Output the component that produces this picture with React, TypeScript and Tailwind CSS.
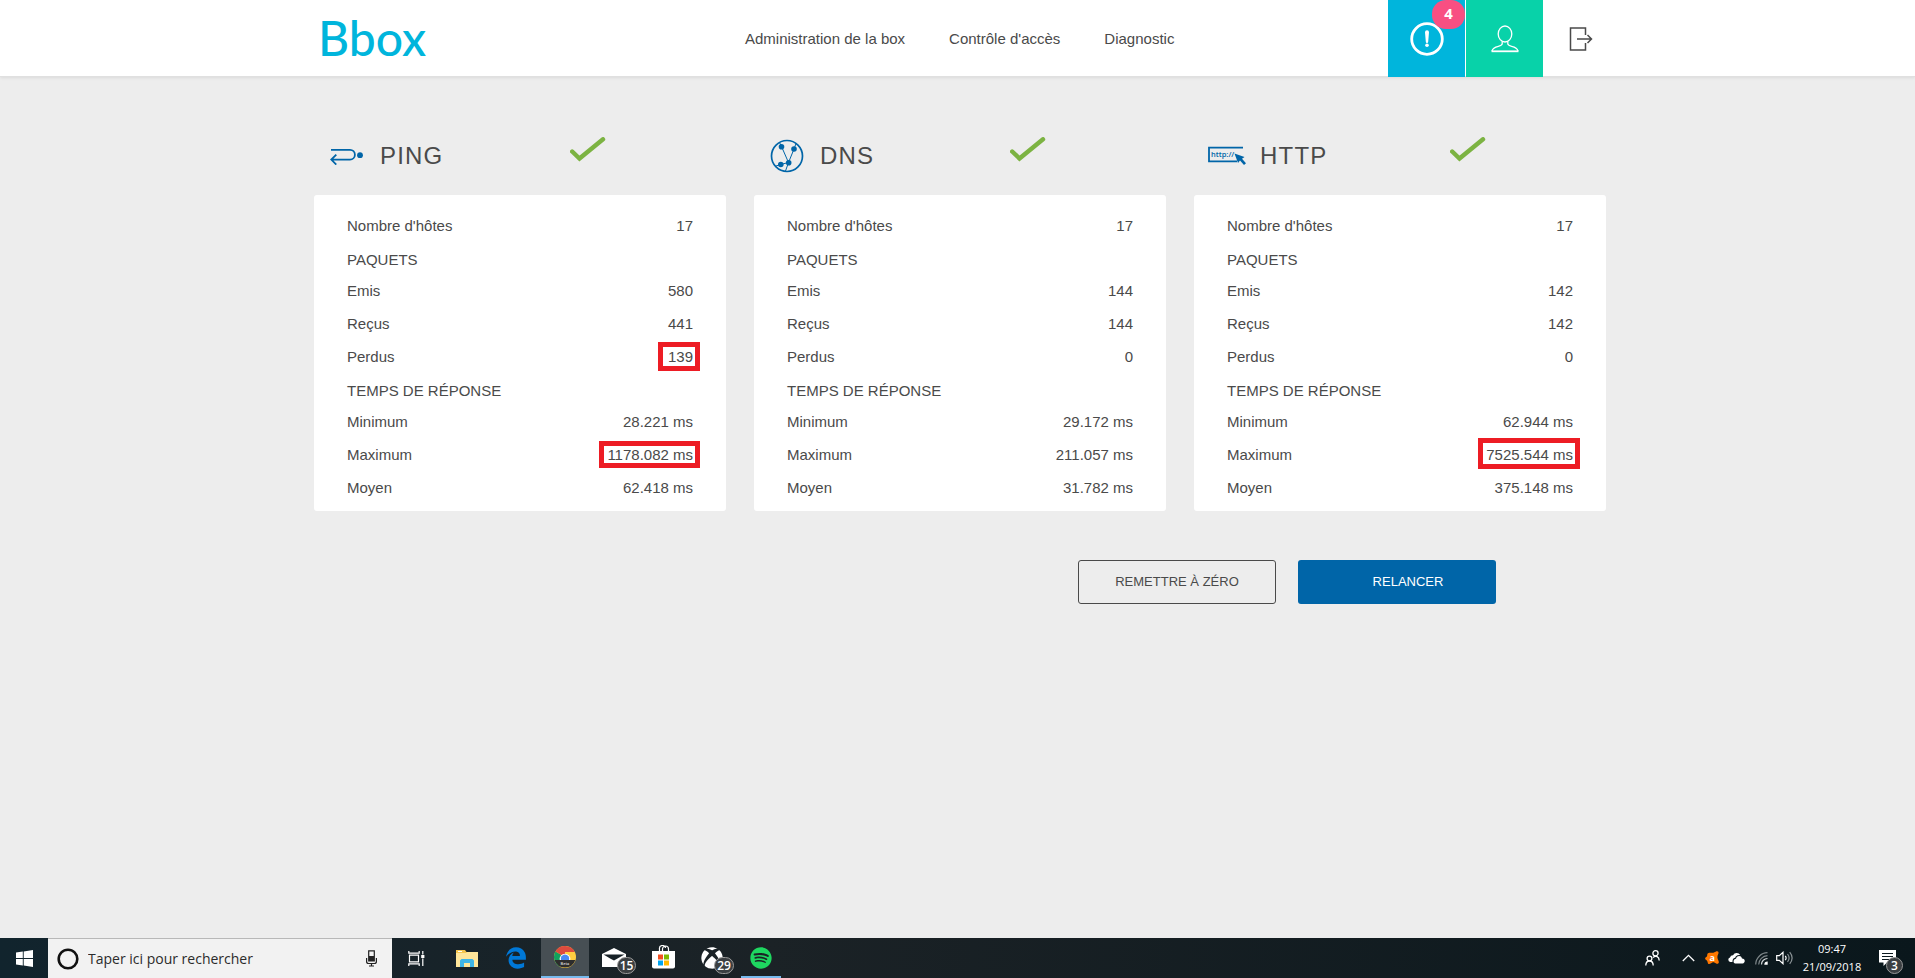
import type { ReactNode } from "react";
import { FaEdgeLegacy, FaSpotify, FaXbox } from "react-icons/fa";

type Row = { label: string; value?: string; mark?: string };

type Panel = { title: string; icon: ReactNode; rows: Row[] };

function PingIcon() {
  return (
    <svg width="34" height="17" viewBox="0 0 34 17" fill="none" stroke="#0065a8" strokeWidth="1.8" aria-hidden="true">
      <path d="M1 1.8H20a4.9 4.9 0 0 1 0 9.8H1.5M6.3 6.6 1.3 11.6l5 5" />
      <circle cx="30" cy="7.2" r="2.9" fill="#0065a8" stroke="none" />
    </svg>
  );
}

function DnsIcon() {
  return (
    <svg width="34" height="34" viewBox="0 0 34 34" fill="none" stroke="#0065a8" aria-hidden="true">
      <circle cx="17" cy="17" r="15.5" strokeWidth="1.7" />
      <path d="M11.5 7.5 18.5 23.5 24 10 26 4.5M11.5 7.5 9.5 3.5M18.5 23.5 10.5 25.5 6 27M18.5 23.5 15.5 32" strokeWidth="1" />
      <g fill="#0065a8" stroke="none">
        <circle cx="11.5" cy="7.7" r="2.8" />
        <circle cx="24" cy="10" r="2.8" />
        <circle cx="18.7" cy="23.7" r="2.8" />
        <circle cx="10.8" cy="25.5" r="2.8" />
      </g>
    </svg>
  );
}

function HttpIcon() {
  return (
    <svg width="39" height="20" viewBox="0 0 39 20" aria-hidden="true">
      <path d="M35 1.7H1V15.3H29" fill="none" stroke="#0065a8" strokeWidth="1.8" />
      <text x="3" y="10.5" fill="#0065a8" fontSize="7.5" fontWeight="600" fontFamily="'Open Sans', sans-serif">
        http://
      </text>
      <path d="m26.500 7.500 10 3.500-2.500 1.800 4 4.500-2 1.800-4-4.500-2 2.300z" fill="#0065a8" />
    </svg>
  );
}

function CheckIcon() {
  return (
    <svg width="36" height="26" viewBox="0 0 36 26" fill="none" stroke="#7cb342" strokeWidth="4.4" strokeLinecap="round" aria-hidden="true">
      <path d="M2.2 14.5 9.5 21.500 33 2.300" strokeLinejoin="miter" />
    </svg>
  );
}

const shortMark = "-left-[10px] -right-[7px] top-[2px] bottom-[2px]";
const longMark = "-left-[8px] -right-[7px] top-[3px] bottom-[3px]";
const tallMark = "-left-[8px] -right-[7px] top-0 bottom-[2px]";

function rows(sent: string, got: string, lost: string, min: string, max: string, avg: string, lostMark?: string, maxMark?: string): Row[] {
  return [
    { label: "Nombre d'hôtes", value: "17" },
    { label: "PAQUETS" },
    { label: "Emis", value: sent },
    { label: "Reçus", value: got },
    { label: "Perdus", value: lost, mark: lostMark },
    { label: "TEMPS DE RÉPONSE" },
    { label: "Minimum", value: min },
    { label: "Maximum", value: max, mark: maxMark },
    { label: "Moyen", value: avg },
  ];
}

const panels: Panel[] = [
  { title: "PING", icon: <PingIcon />, rows: rows("580", "441", "139", "28.221 ms", "1178.082 ms", "62.418 ms", shortMark, longMark) },
  { title: "DNS", icon: <DnsIcon />, rows: rows("144", "144", "0", "29.172 ms", "211.057 ms", "31.782 ms") },
  { title: "HTTP", icon: <HttpIcon />, rows: rows("142", "142", "0", "62.944 ms", "7525.544 ms", "375.148 ms", undefined, tallMark) },
];

function ResultPanel({ title, icon, rows }: Panel) {
  return (
    <section>
      <div className="flex h-[70px] items-center pb-2 pl-[13px]">
        <span className="flex w-10 justify-center">{icon}</span>
        <h2 className="w-[203px] pl-[13px] text-2xl tracking-wider">{title}</h2>
        <span className="mb-3">
          <CheckIcon />
        </span>
      </div>
      <div className="rounded-[3px] bg-white px-[33px] pt-[14px] pb-[7px]">
        <table className="w-full text-[15px]" aria-label={title}>
          <tbody>
            {rows.map((row) =>
              row.value === undefined ? (
                <tr key={row.label} className="h-8">
                  <th colSpan={2} scope="colgroup" className="p-0 pt-1 text-left font-normal leading-7">
                    {row.label}
                  </th>
                </tr>
              ) : (
                <tr key={row.label} className="h-[33px]">
                  <th scope="row" className="p-0 text-left font-normal leading-[33px]">
                    {row.label}
                  </th>
                  <td className="p-0 text-right leading-[33px]">
                    <span className="relative inline-block">
                      {row.value}
                      {row.mark && <span className={`absolute border-[5px] border-[#ed1c24] ${row.mark}`} />}
                    </span>
                  </td>
                </tr>
              ),
            )}
          </tbody>
        </table>
      </div>
    </section>
  );
}

function Header() {
  return (
    <header className="border-b border-[#e0e0e0] bg-white pl-[5px] shadow-[0_1px_3px_rgba(0,0,0,0.08)]">
      <div className="mx-auto flex h-[76px] max-w-[1292px] items-center">
        <a href="#accueil" className="w-[431px] pl-1 font-['Lato',sans-serif] text-5xl font-medium leading-none text-[#00b5dc]">
          Bbox
        </a>
        <nav className="flex gap-11 pt-0.5 text-[15px]">
          <a href="#administration">Administration de la box</a>
          <a href="#acces">Contrôle d'accès</a>
          <a href="#diagnostic">Diagnostic</a>
        </nav>
        <div className="ml-auto flex gap-px self-start">
          <button type="button" aria-label="Alertes" className="relative flex h-[77px] w-[77px] items-center justify-center bg-[#00b5dc]">
            <svg width="34" height="34" viewBox="0 0 34 34" fill="none" aria-hidden="true">
              <circle cx="17" cy="17" r="15.3" stroke="#fff" strokeWidth="2.8" />
              <path d="M15 10.2a2 2 0 0 1 4 0l-.8 9.5a1.200 1.200 0 0 1-2.400 0z" fill="#fff" />
              <circle cx="17" cy="23.3" r="1.8" fill="#fff" />
            </svg>
            <span className="absolute top-0 right-0 flex h-[29px] w-[33px] items-center justify-center rounded-[14px] bg-[#f84f82] pb-0.5 font-['Open_Sans',sans-serif] text-[15px] font-bold text-white">
              4
            </span>
          </button>
          <button type="button" aria-label="Mon compte" className="flex h-[77px] w-[77px] items-center justify-center bg-[#08d2a9]">
            <svg width="28" height="28" viewBox="0 0 28 28" fill="none" stroke="#fff" strokeWidth="1.3" aria-hidden="true">
              <ellipse cx="14" cy="9" rx="6.800" ry="8" />
              <path d="M11.200 16.500v2.300c0 3.700-9 1-10.200 7.200M16.800 16.500v2.300c0 3.700 9 1 10.200 7.200" />
              <path d="M.5 26.300h27" strokeWidth="1.800" />
            </svg>
          </button>
        </div>
        <button type="button" aria-label="Déconnexion" className="w-[63px] pl-[26px] pt-0.5">
          <svg width="24" height="24" viewBox="0 0 24 24" fill="none" stroke="#4a4a4a" strokeWidth="1.5" aria-hidden="true">
            <path d="M16.500 8V1H1.500v22h15v-7M8 12h14.500M18.500 8l4 4-4 4" />
          </svg>
        </button>
      </div>
    </header>
  );
}

function WindowsIcon() {
  return (
    <svg width="17" height="17" viewBox="0 0 17 17" fill="#fff" aria-hidden="true">
      <path d="M0 2.500 6.800 1.500V8H0zM7.700 1.400 17 0v8H7.700zM0 9h6.800v6.500L0 14.500zM7.700 9H17v8l-9.300-1.400z" />
    </svg>
  );
}

function TaskViewIcon() {
  return (
    <svg width="17" height="17" viewBox="0 0 17 17" fill="none" stroke="#fff" strokeWidth="1.2" aria-hidden="true">
      <path d="M.8 1v2.200h10.400V1M.8 16v-2.200h10.400V16M1.500 5.200h9v6.600h-9zM14.800 1v3.500M14.800 8.500V16" />
      <path d="M13.200 5h3.200v3h-3.200z" fill="#fff" stroke="none" />
    </svg>
  );
}

function FolderIcon() {
  return (
    <svg width="22" height="19" viewBox="0 0 22 19" aria-hidden="true">
      <path d="M0 1h9l1.500 2H21v15H0z" fill="#f5c64f" />
      <path d="M0 4h10l1-1h11v15H0z" fill="#ffe69a" />
      <path d="M4 18v-6.500L5.500 10h11l1.500 1.500V18h-4v-4H8v4z" fill="#3fb5e6" />
      <path d="M2 2h4v1H2z" fill="#fff" />
    </svg>
  );
}

function ChromeIcon() {
  return (
    <svg width="22" height="22" viewBox="0 0 22 22" aria-hidden="true">
      <circle cx="11" cy="11" r="11" fill="#ffcd40" />
      <path d="M11 11 1.500 5.500A11 11 0 0 0 6 20.800z" fill="#12a15d" />
      <path d="M11 11 1.500 5.500a11 11 0 0 1 19.200.5H11z" fill="#dd4b3e" />
      <path d="M.6 14h20.800A11 11 0 0 1 .6 14z" fill="#2d2d2d" />
      <path d="M5.800 14a5.300 5.300 0 1 1 10.400 0z" fill="#fff" />
      <path d="M7 14a4.200 4.200 0 1 1 8 0z" fill="#4a8af4" />
      <text x="11" y="18.800" fill="#ddd" fontSize="4" fontWeight="600" textAnchor="middle" fontFamily="'Open Sans', sans-serif">
        Beta
      </text>
    </svg>
  );
}

function MailIcon() {
  return (
    <svg width="24" height="20" viewBox="0 0 24 20" aria-hidden="true">
      <path d="M0 6 12 0l12 6v13H0z" fill="#fff" />
      <path d="M1.500 6.500h21L12 12.500l-3-1.500z" fill="#172127" />
    </svg>
  );
}

function StoreIcon() {
  return (
    <svg width="23" height="24" viewBox="0 0 23 24" aria-hidden="true">
      <path d="M7.500 7V4a3 3 0 0 1 6-1M10.500 7V4a3 3 0 0 1 6 0v3" fill="none" stroke="#fff" strokeWidth="1.200" />
      <path d="M0 6h23v15.500a2 2 0 0 1-2 2H2a2 2 0 0 1-2-2z" fill="#fff" />
      <path d="M6 9.500h5v5H6z" fill="#f25022" />
      <path d="M12 9.500h5v5h-5z" fill="#7fba00" />
      <path d="M6 15.500h5v5H6z" fill="#00a4ef" />
      <path d="M12 15.500h5v5h-5z" fill="#ffb900" />
    </svg>
  );
}

function Count({ children, className }: { children: string; className: string }) {
  return (
    <span className={`absolute flex h-[17px] items-center justify-center rounded-full border border-[#9a9a9a] bg-[#3b3f42] font-['Open_Sans',sans-serif] text-xs font-semibold text-white ${className}`}>
      {children}
    </span>
  );
}

const taskButton = "relative flex h-10 w-12 items-center justify-center";

function Taskbar() {
  return (
    <footer className="flex h-10 items-center bg-linear-to-r from-[#11242d] via-[#1b2226] via-40% to-[#0a171c] font-['Open_Sans','Noto_Sans',sans-serif] text-white">
      <button type="button" aria-label="Démarrer" className={taskButton}>
        <WindowsIcon />
      </button>
      <label className="flex h-10 w-[344px] items-center border-t border-[#b8b8b8] bg-[#f2f2f2] pl-[9px] pr-[15px]">
        <svg width="22" height="22" viewBox="0 0 22 22" fill="none" aria-hidden="true">
          <circle cx="11" cy="11" r="9.300" stroke="#111" strokeWidth="2.600" />
        </svg>
        <input
          type="text"
          aria-label="Rechercher"
          placeholder="Taper ici pour rechercher"
          className="ml-[9px] min-w-0 flex-1 bg-transparent text-sm text-[#2b2b2b] outline-none placeholder:text-[#2b2b2b]"
        />
        <svg width="11" height="17" viewBox="0 0 11 17" fill="none" stroke="#222" strokeWidth="1.200" aria-hidden="true">
          <path d="M2.700.8h5.600v10H2.700zM.6 8v3.500c0 1.300.8 2 2 2h5.800c1.200 0 2-.7 2-2V8M5.500 13.500V16M3 16h5" />
          <path d="M3 6h5v5H3z" fill="#222" stroke="none" />
        </svg>
      </label>
      <button type="button" aria-label="Affichage des tâches" className={taskButton}>
        <TaskViewIcon />
      </button>
      <div className="ml-[3px] flex gap-px">
        <button type="button" aria-label="Explorateur de fichiers" className={taskButton}>
          <FolderIcon />
        </button>
        <button type="button" aria-label="Edge" className={taskButton}>
          <FaEdgeLegacy size={22} color="#0078d7" />
        </button>
        <button type="button" aria-label="Chrome" className={`${taskButton} border-b-2 border-[#76b9ed] bg-[#474f54]`}>
          <ChromeIcon />
        </button>
        <button type="button" aria-label="Courrier" className={taskButton}>
          <MailIcon />
          <Count className="right-[2px] bottom-[4px] w-[19px]">15</Count>
        </button>
        <button type="button" aria-label="Store" className={`${taskButton} pb-0.5`}>
          <StoreIcon />
        </button>
        <button type="button" aria-label="Xbox" className={taskButton}>
          <FaXbox size={22} color="#fff" />
          <Count className="right-[2px] bottom-[4px] w-[20px]">29</Count>
        </button>
        <button type="button" aria-label="Spotify" className={taskButton}>
          <FaSpotify size={22} color="#1ed760" />
          <span className="absolute bottom-0 left-1 right-1 h-0.5 bg-[#76b9ed]" />
        </button>
      </div>
      <div className="ml-auto flex items-center">
        <button type="button" aria-label="Contacts" className="mr-[22px]">
          <svg width="15" height="16" viewBox="0 0 15 16" fill="none" stroke="#fff" strokeWidth="1.300" aria-hidden="true">
            <circle cx="4.500" cy="8.500" r="2.400" />
            <circle cx="10.500" cy="3.300" r="2.600" />
            <path d="M.8 15.500c0-6 7.400-6 7.400 0M8 7.500c3-2.500 6.200-.8 6.200 3" />
          </svg>
        </button>
        <button type="button" aria-label="Icônes cachées" className="mr-[10px]">
          <svg width="13" height="8" viewBox="0 0 13 8" fill="none" stroke="#fff" strokeWidth="1.300" aria-hidden="true">
            <path d="m.8 7 5.700-5.700L12.200 7" />
          </svg>
        </button>
        <svg width="14" height="14" viewBox="0 0 14 14" className="mr-[9px]" aria-hidden="true">
          <path d="M3 2.200C5 1.200 7 2.200 9 1.600 10.500 1 11 .2 12.300.3c1.300.2 1.500 1.600.9 2.800-.8 1.600-.9 3-.6 4.500.3 1.400 1.500 2.600 1.200 4-.3 1.300-1.600 1.500-2.700.9C9.800 11.700 9 11 7.800 11.300c-1.300.4-2.500 2-4 1.700C2.500 12.700 2.900 11 2.200 9.900 1.500 8.800.1 8.600.1 7.400c0-1.300 1.600-1.500 2-2.500C2.400 3.900 2 2.800 3 2.200z" fill="#ff7800" />
          <text x="7.300" y="9.500" fill="#fff" fontSize="9" fontWeight="700" textAnchor="middle" fontFamily="'Open Sans', sans-serif">
            a
          </text>
        </svg>
        <svg width="17" height="11" viewBox="0 0 17 11" className="mr-[10px]" aria-hidden="true">
          <path d="M4.500 9H2.300A2.300 2.300 0 0 1 2 4.500 3 3 0 0 1 5 2.200 4.200 4.200 0 0 1 12.200 2C9 1.500 7.500 3.200 7.200 4.700 5.500 4.800 4.300 6.500 4.500 9z" fill="#fff" />
          <path d="M7.200 10.500c-2.400-.4-2.200-4.500.8-4.700.3-3.500 5.400-4 6-.3 3.600 0 3.500 4.700.6 5z" fill="#fff" />
        </svg>
        <svg width="13" height="13" viewBox="0 0 13 13" fill="none" strokeWidth="1.200" className="mr-[8px]" aria-hidden="true">
          <path d="M.7 12.500A12 12 0 0 1 12.500.7M3.700 12.500a9 9 0 0 1 8.800-8.800" stroke="#7c8588" />
          <path d="M6.500 12.500a6 6 0 0 1 6-6" stroke="#d0d4d5" />
          <path d="M9.300 12.800a3.300 3.300 0 0 1 3.400-3.400v3.400z" fill="#fff" />
        </svg>
        <svg width="17" height="14" viewBox="0 0 17 14" fill="none" stroke="#fff" strokeWidth="1.200" className="mr-[9px]" aria-hidden="true">
          <path d="M.7 4.700h2.600L7 1.300v11.400L3.300 9.300H.7zM9.300 4.800c1 1.400 1 3 0 4.400" />
          <path d="M11.500 3c2 2.500 2 5.500 0 8M13.700 1.200c3 3.600 3 8 0 11.600" stroke="#8a9295" />
        </svg>
        <div className="w-[60px] text-center text-[11px] leading-[18px]">
          <p>09:47</p>
          <p className="whitespace-nowrap">21/09/2018</p>
        </div>
        <button type="button" aria-label="Notifications" className="relative ml-[17px] flex h-10 w-[36px] items-center">
          <svg width="17" height="16" viewBox="0 0 17 16" aria-hidden="true">
            <path d="M0 0h17v12.500H8L4.500 16v-3.500H0z" fill="#fff" />
            <path d="M3 3.500h11M3 6.500h11M3 9.500h7" stroke="#0d1a20" strokeWidth="1.200" />
          </svg>
          <Count className="bottom-[4px] left-[7px] w-[17px]">3</Count>
        </button>
      </div>
    </footer>
  );
}

export default function App() {
  return (
    <div className="flex min-h-screen flex-col bg-[#ededed] font-['Liberation_Sans',Arial,sans-serif] text-[#4a4a4a]">
      <Header />
      <main className="flex-1 pl-[5px]">
        <div className="mx-auto max-w-[1292px] pt-[48px]">
          <div className="grid grid-cols-3 gap-7">
            {panels.map((panel) => (
              <ResultPanel key={panel.title} {...panel} />
            ))}
          </div>
          <div className="mt-[49px] mr-[110px] flex justify-end gap-[22px] text-[13px]">
            <button type="button" className="h-11 w-[198px] rounded-[3px] border border-[#4a4a4a]">
              REMETTRE À ZÉRO
            </button>
            <button type="button" className="h-11 w-[198px] rounded-[3px] bg-[#0065a8] pl-[22px] text-white">
              RELANCER
            </button>
          </div>
        </div>
      </main>
      <Taskbar />
    </div>
  );
}
